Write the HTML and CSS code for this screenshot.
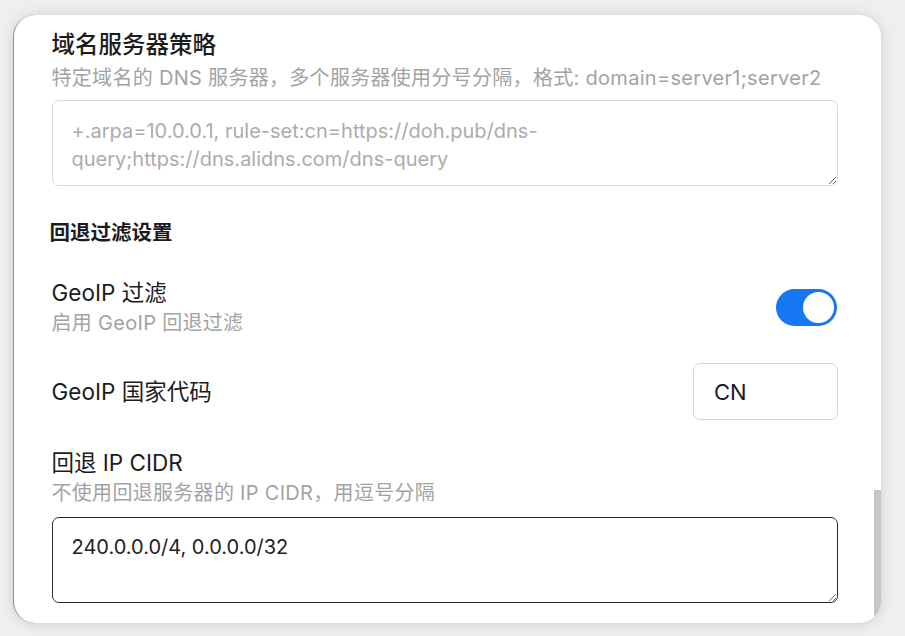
FILE: index.html
```html
<!DOCTYPE html>
<html lang="zh-CN">
<head>
<meta charset="utf-8">
<title>DNS 设置</title>
<link rel="stylesheet" href="styles.css">
</head>
<body>
<div class="card">
  <div class="content">
    <div class="field">
      <div class="title">域名服务器策略</div>
      <div class="hint">特定域名的 DNS 服务器，多个服务器使用分号分隔，格式: domain=server1;server2</div>
      <textarea class="area area-first" rows="2" placeholder="+.arpa=10.0.0.1, rule-set:cn=https://doh.pub/dns-query;https://dns.alidns.com/dns-query"></textarea>
    </div>

    <div class="section">回退过滤设置</div>

    <div class="row row-toggle">
      <div class="text">
        <div class="label">GeoIP 过滤</div>
        <div class="hint">启用 GeoIP 回退过滤</div>
      </div>
      <div class="switch"><span class="knob"></span></div>
    </div>

    <div class="row row-input">
      <div class="label">GeoIP 国家代码</div>
      <input class="code" type="text" value="CN">
    </div>

    <div class="field field-last">
      <div class="label">回退 IP CIDR</div>
      <div class="hint">不使用回退服务器的 IP CIDR，用逗号分隔</div>
      <textarea class="area area-focus" rows="2">240.0.0.0/4, 0.0.0.0/32</textarea>
    </div>
  </div>
  <div class="track"><div class="thumb"></div></div>
</div>
</body>
</html>
```
FILE: styles.css
```css
html, body {
  margin: 0;
  padding: 0;
}
body {
  background: #efefef;
  font-family: "Inter", "Noto Sans CJK SC", sans-serif;
  color: #1c1c1e;
  padding: 15px 22px 0 13px;
  height: 636px;
  box-sizing: border-box;
  overflow: hidden;
}
.card {
  width: 868px;
  height: 608px;
  background: #ffffff;
  border-radius: 22px;
  border-left: 1.5px solid #8f8f8f;
  box-shadow: 0 0 16px rgba(0, 0, 0, 0.10), 0 2px 6px rgba(0, 0, 0, 0.05);
  display: flex;
  overflow: hidden;
  box-sizing: border-box;
}
.content {
  flex: 1;
  padding: 14px 36px 0 37.5px;
  display: flex;
  flex-direction: column;
}
.title {
  font-size: 23.5px;
  line-height: 32px;
  font-weight: 500;
  color: #1c1c1e;
  margin-bottom: 3px;
}
.label {
  font-size: 22.5px;
  line-height: 32px;
  font-weight: 400;
  color: #1c1c1e;
}
.hint {
  font-size: 20px;
  line-height: 28px;
  letter-spacing: 0.3px;
  color: #a3a3a3;
  white-space: nowrap;
}
.area {
  display: block;
  width: 100%;
  box-sizing: border-box;
  margin-top: 8px;
  padding: 16px 19px 12px;
  font-family: "Inter", "Noto Sans CJK SC", sans-serif;
  font-size: 20px;
  line-height: 28px;
  color: #222222;
  border: 1px solid #d9d9d9;
  border-radius: 7px;
  background: #ffffff;
  outline: none;
  resize: vertical;
}
.area::placeholder {
  color: #acacac;
}
.area-focus {
  border-color: #2b2b2b;
  margin-top: 10px;
  padding-top: 15px;
  padding-bottom: 13px;
}
.section {
  margin: 33px 0 0 -2px;
  font-size: 20.5px;
  line-height: 28px;
  font-weight: 700;
  color: #1c1c1e;
}
.row {
  display: flex;
  align-items: center;
  justify-content: space-between;
}
.row-toggle {
  margin-top: 30px;
}
.row-input {
  margin-top: 26px;
}
.switch {
  width: 61px;
  height: 37px;
  box-sizing: border-box;
  border-radius: 19px;
  background: #1677f2;
  padding: 3px;
  display: flex;
  justify-content: flex-end;
  margin-right: 1px;
}
.knob {
  width: 31px;
  height: 31px;
  border-radius: 50%;
  background: #ffffff;
}
.code {
  width: 145px;
  height: 57px;
  box-sizing: border-box;
  padding: 0 20px;
  font-family: "Inter", "Noto Sans CJK SC", sans-serif;
  font-size: 22px;
  color: #1c1c1e;
  border: 1px solid #d6d6d6;
  border-radius: 7px;
  outline: none;
}
.field-last {
  margin-top: 27px;
}
.track {
  width: 7px;
  display: flex;
  flex-direction: column;
  justify-content: flex-end;
}
.thumb {
  height: 127px;
  margin-bottom: 6px;
  background: #c6c6c6;
  border-radius: 0 0 3px 3px;
}
```
